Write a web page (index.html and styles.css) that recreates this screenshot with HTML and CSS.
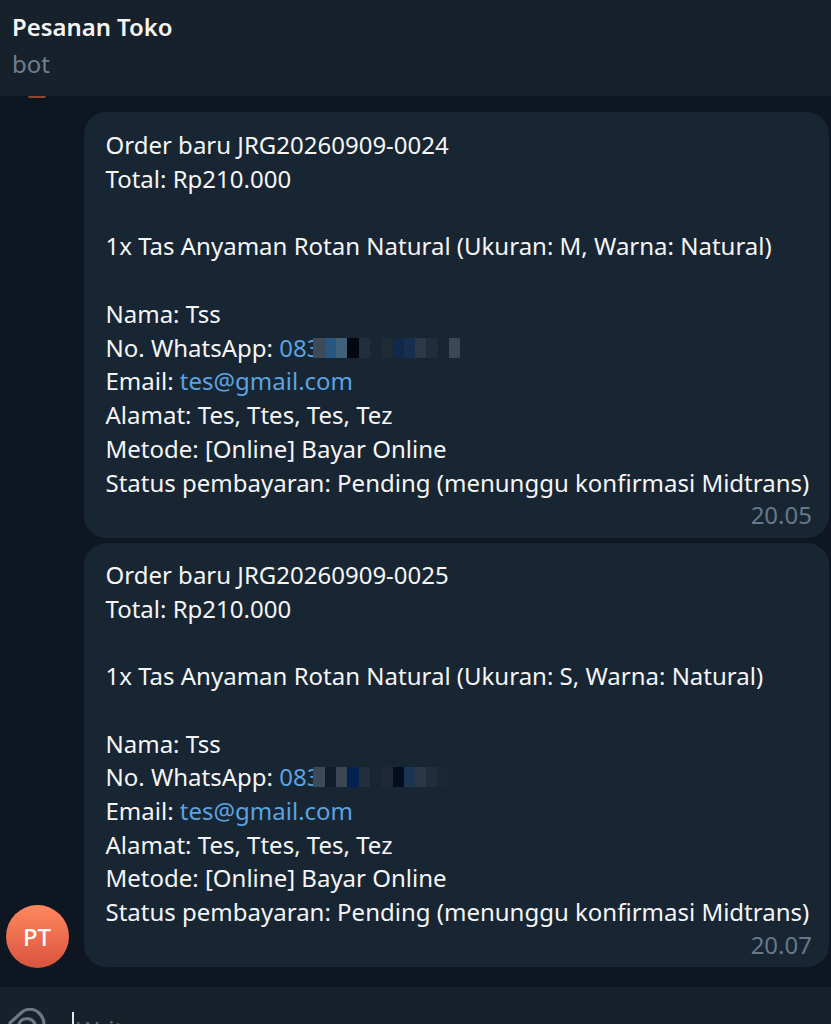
FILE: index.html
```html
<!DOCTYPE html>
<html lang="id">
<head>
<meta charset="utf-8">
<title>Pesanan Toko</title>
<link rel="stylesheet" href="styles.css">
</head>
<body>
<div class="app">
  <header class="head">
    <div class="name">Pesanan Toko</div>
    <div class="status">bot</div>
  </header>
  <main class="feed">
    <span class="peek"></span>
    <div class="group">
      <div class="avatar">PT</div>
      <div class="stack">
        <article class="bubble">
          <p>Order baru JRG20260909-0024</p>
          <p>Total: Rp210.000</p>
          <p>&nbsp;</p>
          <p>1x Tas Anyaman Rotan Natural (Ukuran: M, Warna: Natural)</p>
          <p>&nbsp;</p>
          <p>Nama: Tss</p>
          <p>No. WhatsApp: <a class="link">083</a><span class="blur"><i class="p1"></i><i class="p2"></i><i class="p3"></i><i class="p4"></i><i class="p5"></i><i class="p6"></i><i class="p7"></i><i class="p8"></i><i class="p9"></i><i class="p10"></i><i class="p11"></i><i class="p6"></i><i class="p12"></i></span></p>
          <p>Email: <a class="link">tes@gmail.com</a></p>
          <p>Alamat: Tes, Ttes, Tes, Tez</p>
          <p>Metode: [Online] Bayar Online</p>
          <p>Status pembayaran: Pending (menunggu konfirmasi Midtrans)</p>
          <div class="time">20.05</div>
        </article>
        <article class="bubble">
          <p>Order baru JRG20260909-0025</p>
          <p>Total: Rp210.000</p>
          <p>&nbsp;</p>
          <p>1x Tas Anyaman Rotan Natural (Ukuran: S, Warna: Natural)</p>
          <p>&nbsp;</p>
          <p>Nama: Tss</p>
          <p>No. WhatsApp: <a class="link">083</a><span class="blur"><i class="q1"></i><i class="q2"></i><i class="q3"></i><i class="q4"></i><i class="q5"></i><i class="q6"></i><i class="q7"></i><i class="q8"></i><i class="q9"></i><i class="q10"></i><i class="q11"></i><i class="q12"></i></span></p>
          <p>Email: <a class="link">tes@gmail.com</a></p>
          <p>Alamat: Tes, Ttes, Tes, Tez</p>
          <p>Metode: [Online] Bayar Online</p>
          <p>Status pembayaran: Pending (menunggu konfirmasi Midtrans)</p>
          <div class="time">20.07</div>
        </article>
      </div>
    </div>
  </main>
  <footer class="composer">
    <svg class="clip" viewBox="0 0 44 44" fill="none" stroke="#6c7883" stroke-width="3.2" stroke-linecap="round">
      <path d="M2 15 L13 5 C18 0 26 0 31 5 C35 9 36 12 36 16 M11 24 L11 16 C13 10 23 8 27 16 L28 26"/>
    </svg>
    <div class="input"><span class="caret"></span><span class="hint">Write a message...</span></div>
  </footer>
</div>
</body>
</html>
```
FILE: styles.css
```css
* { box-sizing: border-box; }
html, body { margin: 0; height: 100%; background: #0e1621; }
body { overflow: hidden; font-family: "Noto Sans", "Open Sans", sans-serif; }
.app { width: 831px; height: 1024px; display: flex; flex-direction: column; background: #0e1621; overflow: hidden; }
.head { height: 96px; flex: none; background: #17212b; padding: 10px 12px 0; }
.name { font-size: 23.9px; line-height: 34px; font-weight: 600; color: #f5f5f5; }
.status { font-size: 23.9px; line-height: 34px; color: #6d7f8f; margin-top: 3px; }
.peek { position: absolute; left: 28px; top: 0; width: 18px; height: 2px; border-radius: 0 0 9px 9px; background: #8f452f; }
.feed { position: relative; flex: none; height: 891px; padding: 16px 2px 0 0; }
.group { position: relative; padding-left: 84px; }
.stack { display: flex; flex-direction: column; gap: 5px; }
.bubble { background: #182533; border-radius: 22px; padding: 16px 22px 0 21.5px; height: 426px; color: #f5f5f5; font-size: 24px; line-height: 33.75px; }
.bubble + .bubble { height: 424px; padding-top: 15px; }
.bubble p { margin: 0; white-space: nowrap; }
.bubble + .bubble p { line-height: 33.7px; }
.link { color: #5ba3e0; }
.time { font-size: 24px; line-height: 30px; text-align: right; color: #66788a; margin-top: 1px; margin-right: -5px; }
.blur { display: inline-flex; vertical-align: -1px; height: 20px; margin-left: -7px; }
.blur i { display: block; width: 11.3px; height: 20px; }
.avatar { position: absolute; left: 5.5px; bottom: -1px; width: 63px; height: 63px; border-radius: 50%; background: linear-gradient(#ff885e, #d9533f); color: #fff; font-size: 23.9px; font-weight: 500; line-height: 63px; text-align: center; }
.p1 { background: #3d4a58; } .p2 { background: #2a5580; } .p3 { background: #40607a; } .p4 { background: #020812; } .p5 { background: #222e3b; } .p6 { background: #182533; } .p7 { background: #1f2a37; } .p8 { background: #0e2a48; } .p9 { background: #182e4a; } .p10 { background: #2c3947; } .p11 { background: #212d3a; } .p12 { background: #3a4856; }
.q1 { background: #3d4a58; } .q2 { background: #101d2a; } .q3 { background: #3a4652; } .q4 { background: #02234f; } .q5 { background: #222e3b; } .q6 { background: #182533; } .q7 { background: #1e2935; } .q8 { background: #020e1e; } .q9 { background: #1a3650; } .q10 { background: #2a3745; } .q11 { background: #212d3a; } .q12 { background: #1a2735; }
.composer { flex: 1; background: #17212b; display: flex; align-items: flex-start; padding: 21px 0 0 8px; gap: 20px; }
.clip { width: 44px; height: 44px; flex: none; }
.input { font-size: 23.9px; line-height: 30px; color: #5c6b79; white-space: nowrap; margin-top: 4px; }
.caret { display: inline-block; width: 1.5px; height: 30px; background: #e8e8e8; vertical-align: top; margin-right: 3px; }
.hint { position: relative; top: 3px; }
```
